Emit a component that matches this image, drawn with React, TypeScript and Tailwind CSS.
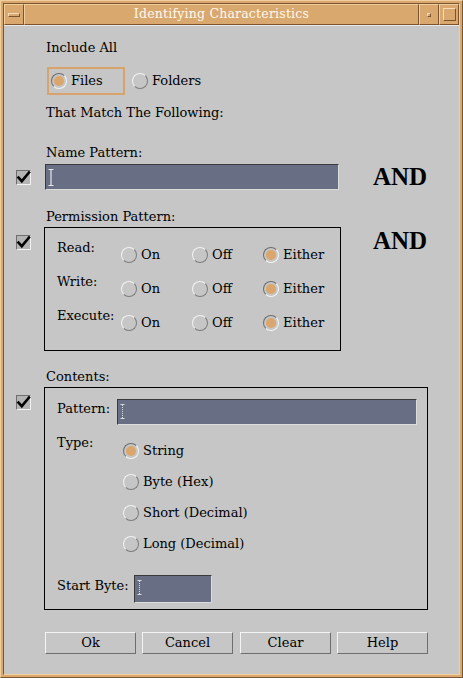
import React from "react";

function Radio({ on, className = "" }: { on?: boolean; className?: string }) {
  if (on) {
    return (
      <span
        className={`block w-[16px] h-[16px] rounded-full border border-t-[#6e6e6e] border-l-[#6e6e6e] border-b-[#f4f4f4] border-r-[#f4f4f4] flex items-center justify-center shrink-0 ${className}`}
      >
        <span className="block w-[10px] h-[10px] rounded-full bg-[#dba66c]" />
      </span>
    );
  }
  return (
    <span
      className={`block w-[16px] h-[16px] rounded-full border border-t-[#f2f2f2] border-l-[#f2f2f2] border-b-[#7c7c7c] border-r-[#7c7c7c] shrink-0 ${className}`}
    />
  );
}

function Check() {
  return (
    <span className="block w-[15px] h-[15px] border border-t-[#6e6e6e] border-l-[#6e6e6e] border-b-[#f2f2f2] border-r-[#f2f2f2] bg-[#b4b4b4] shrink-0 relative overflow-visible">
      <svg width="15" height="15" viewBox="0 0 15 15" className="absolute left-[-1px] top-[-1px]">
        <path d="M2.5 7.5 L5.8 11.2 L13 2.5" fill="none" stroke="#000" strokeWidth="2.6" strokeLinecap="square" />
      </svg>
    </span>
  );
}

function Field({ w, h, solid }: { w: string; h: string; solid?: boolean }) {
  return (
    <div
      className={`${w} ${h} bg-[#686e83] border border-t-[#3a3a3a] border-l-[#3a3a3a] border-b-[#dcdcdc] border-r-[#dcdcdc] shrink-0 relative`}
    >
      {solid ? (
        <svg width="6" height="17" viewBox="0 0 6 17" className="absolute left-[2px] top-[4px]">
          <path d="M0.5 0.5 H5.5 M3 0.5 V16.5 M0.5 16.5 H5.5" stroke="#e8e8e8" strokeWidth="1.2" fill="none" />
        </svg>
      ) : (
        <svg width="5" height="15" viewBox="0 0 5 15" className="absolute left-[2px] top-[4px]">
          <path d="M0.5 0.5 H4.5 M0.5 14.5 H4.5" stroke="#dcdcdc" strokeWidth="1" fill="none" />
          <path d="M2.5 1 V14" stroke="#dcdcdc" strokeWidth="1" strokeDasharray="1 1" fill="none" />
        </svg>
      )}
    </div>
  );
}

function Btn({ label, className = "" }: { label: string; className?: string }) {
  return (
    <div
      className={`w-[91px] h-[22px] border border-t-[#f4f4f4] border-l-[#f4f4f4] border-b-[#6e6e6e] border-r-[#6e6e6e] flex items-center justify-center ${className}`}
    >
      {label}
    </div>
  );
}

function Opt({ on, label }: { on?: boolean; label: string }) {
  return (
    <div className="w-[71px] h-[16px] mt-[7px] flex items-center">
      <Radio on={on} />
      <span className="ml-[4px]">{label}</span>
    </div>
  );
}

function PermRow({ label }: { label: string }) {
  return (
    <div className="h-[34px] flex items-start">
      <div className="w-[64px] h-[16px] flex items-center">{label}</div>
      <Opt label="On" />
      <Opt label="Off" />
      <Opt on label="Either" />
    </div>
  );
}

function TypeOpt({ on, label }: { on?: boolean; label: string }) {
  return (
    <div className="h-[31px] flex items-center">
      <Radio on={on} />
      <span className="ml-[4px]">{label}</span>
    </div>
  );
}

export default function App() {
  return (
    <div className="w-[463px] h-[678px] bg-[#d9a86f] border border-t-[#f3cf9f] border-l-[#f3cf9f] border-b-[#7a5530] border-r-[#7a5530] p-[2px] font-['DejaVu_Serif',serif] text-[13px] text-black">
      <div className="w-full h-full border border-t-[#7a5530] border-l-[#7a5530] border-b-[#f3cf9f] border-r-[#f3cf9f] flex flex-col">
        {/* title bar */}
        <div className="h-[21px] flex shrink-0">
          <div className="w-[20px] h-full border border-t-[#f3cf9f] border-l-[#f3cf9f] border-b-[#7a5530] border-r-[#7a5530] flex items-center justify-center">
            <div className="w-[12px] h-[4px] border border-t-[#f6dcb8] border-l-[#f6dcb8] border-b-[#7a5530] border-r-[#7a5530]" />
          </div>
          <div className="flex-1 h-full border border-t-[#f3cf9f] border-l-[#f3cf9f] border-b-[#7a5530] border-r-[#7a5530] flex items-center justify-center text-[#fff8ec] text-[12.5px] tracking-[0.2px]">
            Identifying Characteristics
          </div>
          <div className="w-[20px] h-full border border-t-[#f3cf9f] border-l-[#f3cf9f] border-b-[#7a5530] border-r-[#7a5530] flex items-center justify-center">
            <div className="w-[4px] h-[4px] border border-t-[#f6dcb8] border-l-[#f6dcb8] border-b-[#7a5530] border-r-[#7a5530]" />
          </div>
          <div className="w-[20px] h-full border border-t-[#f3cf9f] border-l-[#f3cf9f] border-b-[#7a5530] border-r-[#7a5530] flex items-center justify-center">
            <div className="w-[13px] h-[13px] border border-t-[#f6dcb8] border-l-[#f6dcb8] border-b-[#7a5530] border-r-[#7a5530]" />
          </div>
        </div>

        {/* client */}
        <div className="flex-1 bg-[#c6c6c6] border-t border-t-[#e8e8e8] flex flex-col">
          <div className="mt-[12px] h-[20px] flex items-center ml-[42px]">Include All</div>
          <div className="mt-[9px] h-[28px] flex items-center ml-[43px]">
            <div className="w-[78px] h-[28px] border-2 border-[#d9a46b] flex items-center pl-[2px]">
              <Radio on />
              <span className="ml-[4px]">Files</span>
            </div>
            <Radio className="ml-[7px]" />
            <span className="ml-[4px]">Folders</span>
          </div>
          <div className="mt-[8px] h-[20px] flex items-center ml-[42px]">That Match The Following:</div>

          <div className="mt-[20px] h-[20px] flex items-center ml-[42px]">Name Pattern:</div>
          <div className="mt-[1px] h-[26px] flex items-center ml-[12px]">
            <Check />
            <div className="ml-[14px]">
              <Field w="w-[294px]" h="h-[26px]" solid />
            </div>
            <div className="ml-[34px] font-['Liberation_Serif',serif] font-bold text-[25px] leading-[28px]">AND</div>
          </div>

          <div className="mt-[17px] h-[20px] flex items-center ml-[42px]">Permission Pattern:</div>
          <div className="h-[124px] flex items-start ml-[12px]">
            <div className="mt-[8px]">
              <Check />
            </div>
            <div className="ml-[13px] w-[297px] h-[124px] border border-black pt-[12px] pl-[12px] shrink-0">
              <PermRow label="Read:" />
              <PermRow label="Write:" />
              <PermRow label="Execute:" />
            </div>
            <div className="ml-[32px] font-['Liberation_Serif',serif] font-bold text-[25px] leading-[28px]">AND</div>
          </div>

          <div className="mt-[16px] h-[20px] flex items-center ml-[42px]">Contents:</div>
          <div className="h-[223px] flex items-start ml-[12px]">
            <div className="mt-[8px]">
              <Check />
            </div>
            <div className="ml-[13px] w-[384px] h-[223px] border border-black pt-[11px] pl-[12px] shrink-0 flex flex-col">
              <div className="flex items-start">
                <div className="w-[60px] h-[20px] flex items-center">Pattern:</div>
                <Field w="w-[300px]" h="h-[26px]" />
              </div>
              <div className="mt-[10px] flex items-start">
                <div className="w-[66px] h-[16px] flex items-center">Type:</div>
                <div className="flex flex-col">
                  <TypeOpt on label="String" />
                  <TypeOpt label="Byte (Hex)" />
                  <TypeOpt label="Short (Decimal)" />
                  <TypeOpt label="Long (Decimal)" />
                </div>
              </div>
              <div className="mt-[16px] flex items-start">
                <div className="w-[77px] h-[22px] flex items-center">Start Byte:</div>
                <Field w="w-[78px]" h="h-[28px]" />
              </div>
            </div>
          </div>

          <div className="mt-[22px] flex ml-[41px]">
            <Btn label="Ok" />
            <Btn label="Cancel" className="ml-[6px]" />
            <Btn label="Clear" className="ml-[7px]" />
            <Btn label="Help" className="ml-[6px]" />
          </div>
        </div>
      </div>
    </div>
  );
}
